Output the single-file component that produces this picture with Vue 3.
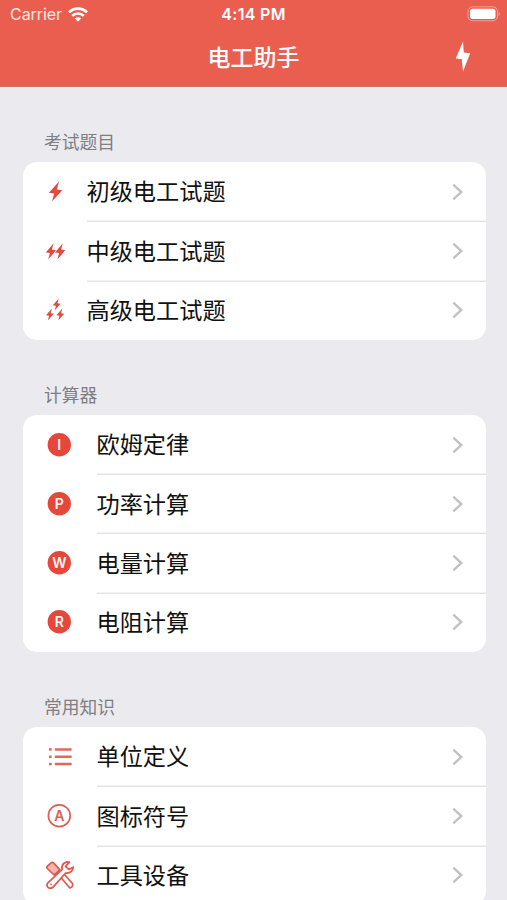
<script setup>
const BOLT = 'M10.3 0 L0 11.2 L5.4 12 L3.2 20 L13.4 8.6 L8 7.8 Z'
const sections = [
  {
    title: '考试题目',
    narrow: true,
    rows: [
      { label: '初级电工试题', icon: 'bolt', bolts: [[6.8, 7.6, 1, 1]] },
      { label: '中级电工试题', icon: 'bolt', bolts: [[3.8, 10.2, 0.76, 0.82], [13, 10.2, 0.76, 0.82]] },
      { label: '高级电工试题', icon: 'bolt', bolts: [[10.8, 6.5, 0.58, 0.6], [4, 16.6, 0.58, 0.6], [14.4, 16.6, 0.58, 0.6]] }
    ]
  },
  {
    title: '计算器',
    rows: [
      { label: '欧姆定律', icon: 'disc', letter: 'I' },
      { label: '功率计算', icon: 'disc', letter: 'P' },
      { label: '电量计算', icon: 'disc', letter: 'W' },
      { label: '电阻计算', icon: 'disc', letter: 'R' }
    ]
  },
  {
    title: '常用知识',
    rows: [
      { label: '单位定义', icon: 'list' },
      { label: '图标符号', icon: 'ring', letter: 'A' },
      { label: '工具设备', icon: 'tools' }
    ]
  }
]
</script>

<template>
  <div class="screen">
    <header>
      <div class="status">
        <div class="carrier">
          <span>Carrier</span>
          <svg width="20" height="15" viewBox="0 0 20 15" fill="none" stroke="#fff" stroke-width="2.7">
            <path d="M1 5.4 C6 .4 14 .4 19 5.4" />
            <path d="M4.2 8.9 C7.5 5.7 12.5 5.7 15.8 8.9" />
            <path d="M10 14.7 L6.8 11.5 C8.6 9.8 11.4 9.8 13.2 11.5 Z" fill="#fff" stroke="none" />
          </svg>
        </div>
        <span class="time">4:14 PM</span>
        <svg class="battery" width="34" height="16" viewBox="0 0 34 16">
          <rect x="1" y=".8" width="29.5" height="14" rx="4.5" fill="none" stroke="#fff" stroke-opacity=".4" />
          <rect x="3" y="2.7" width="25.5" height="10.3" rx="2.7" fill="#fff" />
          <path d="M31.7 5.4 Q34 7.8 31.7 10.2 Z" fill="#fff" fill-opacity=".4" />
        </svg>
      </div>
      <div class="nav">
        <h1>电工助手</h1>
        <svg class="nav-bolt" width="16" height="32" viewBox="0 0 16 32">
          <path d="M8 .5 L.8 17.6 L6.8 18.3 L8 30.5 L15.2 12.3 L8.8 11.5 Z" fill="#fff" />
        </svg>
      </div>
    </header>
    <section v-for="s in sections" :key="s.title" :class="{ narrow: s.narrow }">
      <h2>{{ s.title }}</h2>
      <div class="card">
        <div v-for="r in s.rows" :key="r.label" class="row">
          <svg class="icon" width="36" height="36" viewBox="0 0 36 36">
            <g v-if="r.icon === 'bolt'" fill="#e44a3c">
              <path v-for="(b, i) in r.bolts" :key="i" :d="BOLT" :transform="`translate(${b[0]} ${b[1]}) scale(${b[2]} ${b[3]})`" />
            </g>
            <g v-else-if="r.icon === 'disc'">
              <circle cx="17.3" cy="17.7" r="11.7" fill="#e5483a" />
              <text x="17.3" y="22.9" text-anchor="middle" class="letter" fill="#fff5f3">{{ r.letter }}</text>
            </g>
            <g v-else-if="r.icon === 'list'" fill="#e2685f">
              <g v-for="y in [9.2, 16.5, 23.8]" :key="y">
                <rect x="7" :y="y" width="2.7" height="2.5" />
                <rect x="12.7" :y="y" width="17" height="2.5" rx=".8" />
              </g>
            </g>
            <g v-else-if="r.icon === 'ring'">
              <circle cx="17.3" cy="17.7" r="10.9" fill="none" stroke="#de5d53" stroke-width="1.7" />
              <text x="17.3" y="22.9" text-anchor="middle" class="letter" fill="#de5d53">{{ r.letter }}</text>
            </g>
            <g v-else fill="#fff" stroke="#e0574c" stroke-width="1.7" stroke-linejoin="round">
              <path d="M17 18.3 L20.3 15.2 L30.5 26.5 Q31.4 30 27.8 31 Z" />
              <path d="M25 4.9 Q18.8 6.6 20.2 12.5 L6.1 25.6 Q3.8 28.5 6.2 30.5 Q9 32.3 11.3 29.8 L23.6 16 Q30.3 16.8 31.3 10.2 L26.8 12.4 L23.5 9.3 L27.5 5.2 Z" />
              <path d="M5.4 9.2 L9 5.9 Q10.4 4.8 11.8 6.2 L18 12.8 L12.2 18 L5.7 12 Q4.2 10.5 5.4 9.2 Z" fill="#f2b5ae" />
              <circle cx="9.1" cy="27.4" r=".9" fill="#e0574c" stroke="none" />
            </g>
          </svg>
          <div class="body">
            <span class="label">{{ r.label }}</span>
            <svg width="12" height="18" viewBox="0 0 12 18" fill="none" stroke="#c2c2c5" stroke-width="2.4">
              <path d="M1.3 1.6 L9.3 9 L1.3 16.4" />
            </svg>
          </div>
        </div>
      </div>
    </section>
  </div>
</template>

<style>
body {
  background: #eaeaef;
}
</style>

<style scoped>
.screen {
  height: 900px;
  overflow: hidden;
  background: #eaeaef;
  font-family: Inter, "Noto Sans CJK SC", sans-serif;
  color: #111;
}
header {
  box-sizing: border-box;
  height: 87px;
  background: #ea5e50;
  border-bottom: 1px solid #c4756f;
  color: #fff;
}
.status {
  display: grid;
  grid-template-columns: 1fr auto 1fr;
  align-items: center;
  height: 28px;
  padding: 0 6px 0 10px;
}
.carrier {
  display: flex;
  align-items: center;
  gap: 6px;
  font-size: 16px;
  letter-spacing: -0.05px;
  color: #ffe6e2;
}
.time {
  margin-right: 4px;
  font-size: 16px;
  font-weight: 600;
  letter-spacing: 0.3px;
}
.battery {
  justify-self: end;
}
.nav {
  display: grid;
  grid-template-columns: 1fr auto 1fr;
  align-items: center;
  height: 58px;
  padding-right: 36px;
  padding-left: 36px;
}
h1 {
  grid-column: 2;
  margin: 0;
  padding-top: 2px;
  font-size: 23px;
  line-height: 34px;
  font-weight: 500;
}
.nav-bolt {
  justify-self: end;
}
section {
  padding: 0 21px 0 22.5px;
}
h2 {
  box-sizing: border-box;
  height: 75px;
  margin: 0;
  padding: 43px 0 0 21.5px;
  font-size: 17.8px;
  line-height: 26px;
  font-weight: 400;
  color: #7e7e83;
}
.card {
  border-radius: 14px;
  background: #fff;
}
.row {
  display: flex;
  align-items: center;
  height: 59.3px;
}
.icon {
  flex: none;
  margin-left: 19.5px;
}
.body {
  display: flex;
  flex: 1;
  align-items: center;
  justify-content: space-between;
  height: 100%;
  margin-left: 18.5px;
  padding-right: 22px;
  font-size: 23.2px;
}
.label {
  padding-bottom: 2.5px;
}
.row:not(:last-child) .body {
  box-shadow: 0 1px #e3e3e7, 0 -1px #f4f4f6 inset;
}
.row + .row .body {
  margin-top: 0;
}
.narrow .body {
  margin-left: 8.5px;
}
.letter {
  font-size: 14px;
  font-weight: 600;
}
</style>
